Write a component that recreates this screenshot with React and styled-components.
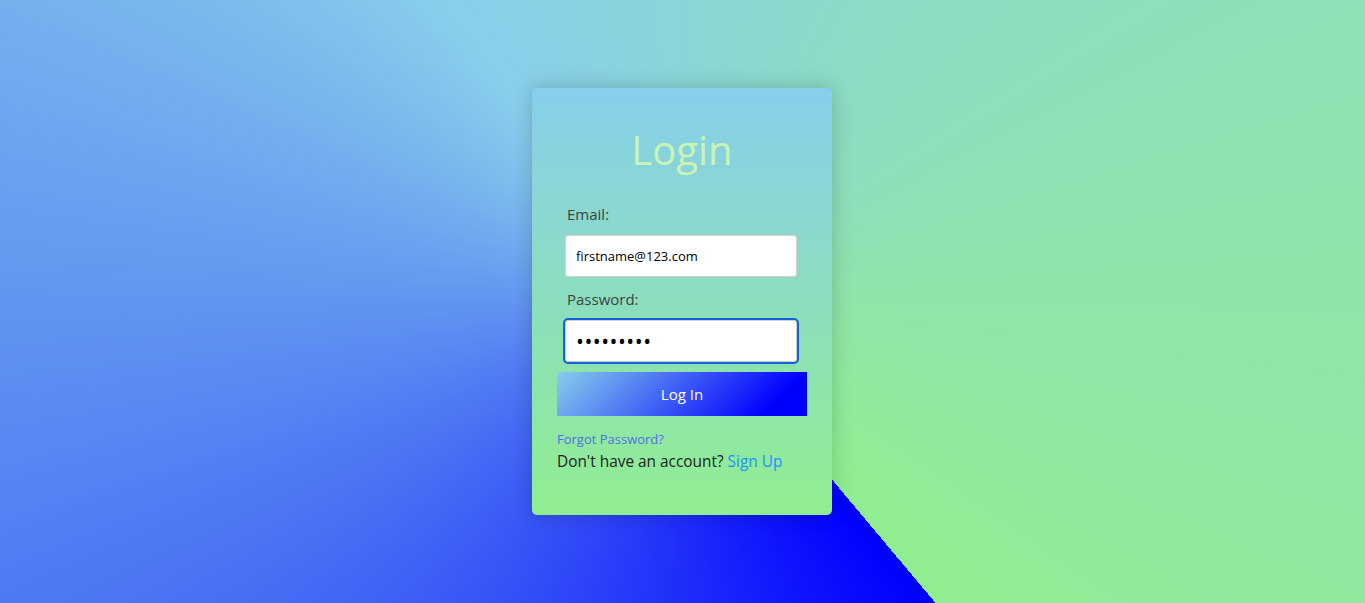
import React from "react";
import styled, { createGlobalStyle } from "styled-components";

const GlobalStyle = createGlobalStyle`
  html, body {
    margin: 0;
    padding: 0;
    height: 100%;
  }
  body {
    font-family: "Open Sans", "Noto Sans", sans-serif;
  }
`;

const App = () => {
  return (
    <>
      <GlobalStyle />
      <Page>
        <Card>
          <Title>Login</Title>
          <Form onSubmit={(e) => e.preventDefault()}>
            <Label htmlFor="email">Email:</Label>
            <Input id="email" type="email" defaultValue="firstname@123.com" />
            <Label htmlFor="password" $gap>
              Password:
            </Label>
            <Input
              id="password"
              type="password"
              defaultValue="123456789"
              $focused
              $dots
            />
            <BtnLogin type="submit">Log In</BtnLogin>
          </Form>
          <LinkForgot href="#">Forgot Password?</LinkForgot>
          <SignupText>
            Don't have an account? <LinkSignup href="#">Sign Up</LinkSignup>
          </SignupText>
        </Card>
      </Page>
    </>
  );
};

const Page = styled.div`
  width: 100vw;
  height: 100vh;
  padding-right: 1px;
  box-sizing: border-box;
  display: flex;
  align-items: center;
  justify-content: center;
  background: conic-gradient(from 140deg at 50% 50%, blue, skyblue, lightgreen);
`;

const Card = styled.div`
  width: 300px;
  height: 427px;
  padding: 25px;
  box-sizing: border-box;
  border-radius: 5px;
  background: linear-gradient(to bottom, skyblue, lightgreen);
  box-shadow: 0 0 20px rgba(0, 0, 0, 0.2);
  display: flex;
  flex-direction: column;
`;

const Title = styled.h1`
  margin: 13px 0 29px;
  text-align: center;
  font-size: 40px;
  line-height: 48px;
  font-weight: 400;
  color: #c8f5b4;
`;

const Form = styled.form`
  display: flex;
  flex-direction: column;
`;

const Label = styled.label`
  margin: ${(p) => (p.$gap ? "11px" : "0")} 0 10px 10px;
  font-size: 15px;
  line-height: 22px;
  color: #38443f;
`;

const Input = styled.input`
  width: 232px;
  height: 42px;
  margin-left: 8px;
  padding: 0 10px;
  box-sizing: border-box;
  border: 1px solid #cfcfcf;
  border-radius: 3px;
  background: #fff;
  font-family: "Open Sans", sans-serif;
  font-size: ${(p) => (p.$dots ? "21px" : "13px")};
  letter-spacing: ${(p) => (p.$dots ? "0.5px" : "normal")};
  color: #000;
  outline: ${(p) => (p.$focused ? "2px solid #1462d6" : "none")};
  outline-offset: 0;
  &:focus {
    outline: 2px solid #1462d6;
  }
`;

const BtnLogin = styled.button`
  width: 250px;
  height: 44px;
  margin-top: 10px;
  border: none;
  background: linear-gradient(135deg, skyblue, blue 85%);
  color: #fff;
  font-family: "Open Sans", sans-serif;
  font-size: 15px;
  cursor: pointer;
`;

const LinkForgot = styled.a`
  margin-top: 14px;
  font-size: 13px;
  line-height: 18px;
  color: #4f6fe6;
  text-decoration: none;
`;

const SignupText = styled.p`
  margin: 3px 0 0;
  font-size: 15.4px;
  line-height: 22px;
  color: #222;
`;

const LinkSignup = styled.a`
  color: #1e90ff;
  text-decoration: none;
`;

export default App;
